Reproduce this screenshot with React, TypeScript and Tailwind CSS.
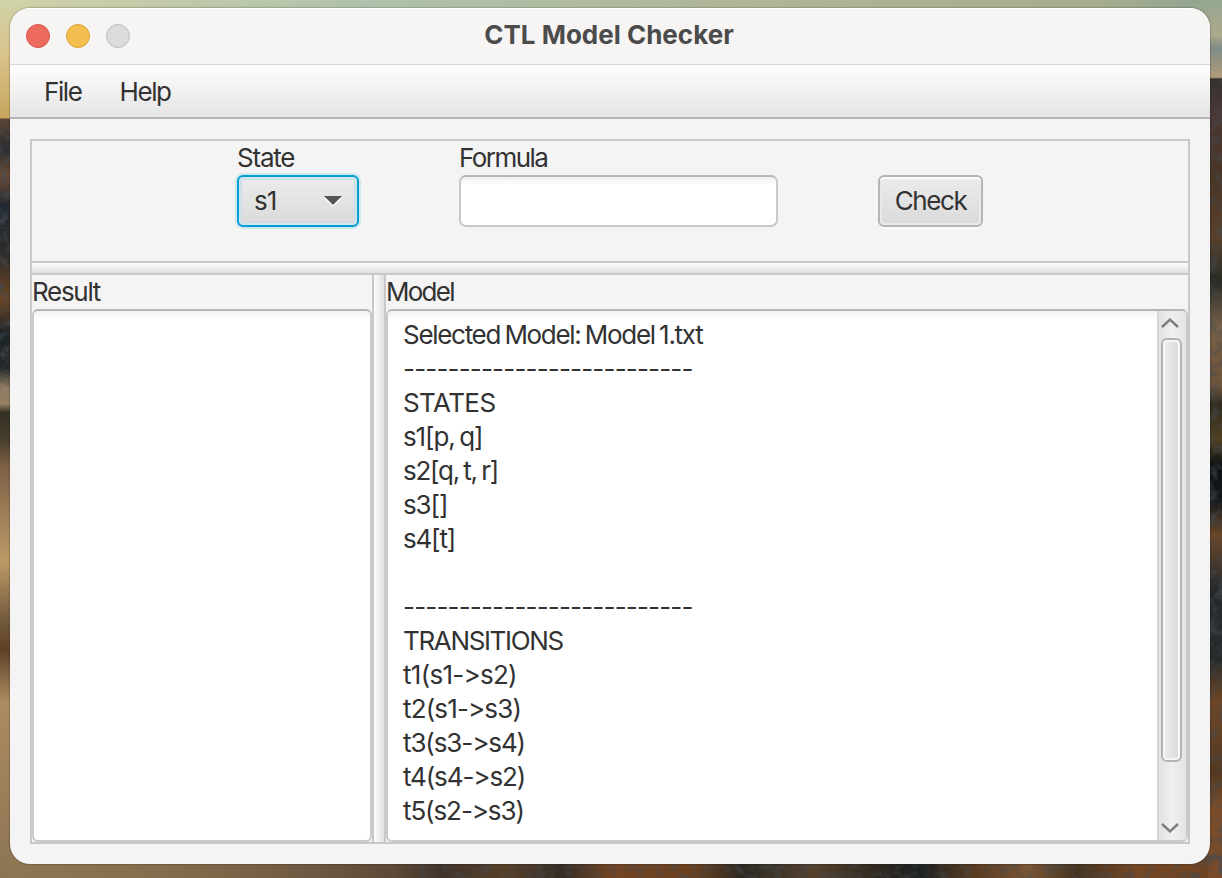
import type { ReactNode } from "react";

function Wallpaper() {
  return (
    <svg className="h-[878px] w-[1222px] [grid-area:1/1]" viewBox="0 0 1222 878" preserveAspectRatio="none">
      <defs>
        <linearGradient id="sky" x1="0" x2="1" y1="0" y2="0">
          <stop offset="0" stopColor="#d0d0a8" />
          <stop offset="0.3" stopColor="#b0c2ab" />
          <stop offset="0.6" stopColor="#b0b698" />
          <stop offset="0.9" stopColor="#a6ad8e" />
          <stop offset="1" stopColor="#8fa392" />
        </linearGradient>
        <linearGradient id="left" x1="0" x2="0" y1="0" y2="1">
          <stop offset="0" stopColor="#d0d2a8" />
          <stop offset="0.06" stopColor="#d8c48c" />
          <stop offset="0.134" stopColor="#c9a55e" />
          <stop offset="0.136" stopColor="#5b4433" />
          <stop offset="0.17" stopColor="#2b2c31" />
          <stop offset="0.2" stopColor="#6e4a30" />
          <stop offset="0.235" stopColor="#1f2830" />
          <stop offset="0.29" stopColor="#2e2c2a" />
          <stop offset="0.34" stopColor="#70451f" />
          <stop offset="0.38" stopColor="#1d2429" />
          <stop offset="0.42" stopColor="#222827" />
          <stop offset="0.44" stopColor="#8f7c63" />
          <stop offset="0.46" stopColor="#948063" />
          <stop offset="0.47" stopColor="#343125" />
          <stop offset="0.5" stopColor="#463c2b" />
          <stop offset="0.53" stopColor="#7b6046" />
          <stop offset="0.59" stopColor="#a08059" />
          <stop offset="0.64" stopColor="#bd9966" />
          <stop offset="0.7" stopColor="#796041" />
          <stop offset="0.74" stopColor="#5d4127" />
          <stop offset="0.8" stopColor="#ab8c61" />
          <stop offset="1" stopColor="#8c7454" />
        </linearGradient>
        <linearGradient id="right" x1="0" x2="0" y1="0" y2="1">
          <stop offset="0" stopColor="#94a690" />
          <stop offset="0.04" stopColor="#aca98c" />
          <stop offset="0.055" stopColor="#7f8c86" />
          <stop offset="0.088" stopColor="#b09c79" />
          <stop offset="0.09" stopColor="#35302f" />
          <stop offset="0.13" stopColor="#4a3734" />
          <stop offset="0.2" stopColor="#493423" />
          <stop offset="0.27" stopColor="#59402a" />
          <stop offset="0.32" stopColor="#272a24" />
          <stop offset="0.37" stopColor="#776047" />
          <stop offset="0.44" stopColor="#6e543b" />
          <stop offset="0.46" stopColor="#2f2b1e" />
          <stop offset="0.5" stopColor="#504021" />
          <stop offset="0.53" stopColor="#0d1011" />
          <stop offset="0.57" stopColor="#14181a" />
          <stop offset="0.61" stopColor="#6b4727" />
          <stop offset="0.67" stopColor="#26282a" />
          <stop offset="0.75" stopColor="#252a2b" />
          <stop offset="0.8" stopColor="#724723" />
          <stop offset="0.88" stopColor="#54381f" />
          <stop offset="0.92" stopColor="#7c4d2a" />
          <stop offset="1" stopColor="#7b4b29" />
        </linearGradient>
        <linearGradient id="ground" x1="0" x2="1" y1="0" y2="0">
          <stop offset="0" stopColor="#8f7652" />
          <stop offset="0.12" stopColor="#856d4d" />
          <stop offset="0.24" stopColor="#715a43" />
          <stop offset="0.32" stopColor="#5b4835" />
          <stop offset="0.36" stopColor="#403329" />
          <stop offset="0.41" stopColor="#584028" />
          <stop offset="0.46" stopColor="#342d25" />
          <stop offset="0.5" stopColor="#744422" />
          <stop offset="0.57" stopColor="#6b401f" />
          <stop offset="0.61" stopColor="#2b2922" />
          <stop offset="0.67" stopColor="#55402b" />
          <stop offset="0.73" stopColor="#2b261f" />
          <stop offset="0.76" stopColor="#1c2021" />
          <stop offset="0.8" stopColor="#56391f" />
          <stop offset="0.85" stopColor="#7c5634" />
          <stop offset="0.89" stopColor="#45331f" />
          <stop offset="0.94" stopColor="#764724" />
          <stop offset="1" stopColor="#704321" />
        </linearGradient>
        <filter id="rocks" x="0" y="0" width="1" height="1">
          <feTurbulence type="fractalNoise" baseFrequency="0.11" numOctaves="4" seed="7" />
          <feColorMatrix values="0 0 0 0 0.06  0 0 0 0 0.07  0 0 0 0 0.08  2.6 0 0 0 -1.1" />
        </filter>
      </defs>
      <rect width="1222" height="30" fill="url(#sky)" />
      <rect width="30" height="878" fill="url(#left)" />
      <rect x="1190" width="32" height="878" fill="url(#right)" />
      <rect x="14" y="850" width="1194" height="28" fill="url(#ground)" />
      <rect y="119" width="30" height="270" filter="url(#rocks)" opacity="0.8" />
      <rect x="1190" y="80" width="32" height="798" filter="url(#rocks)" opacity="0.6" />
      <rect x="420" y="850" width="802" height="28" filter="url(#rocks)" opacity="0.5" />
    </svg>
  );
}

function Line({ children, className }: { children: ReactNode; className: string }) {
  return (
    <div className="h-[34px]">
      <span className={className}>{children}</span>
    </div>
  );
}

const area =
  "overflow-hidden rounded-md border-2 border-[#cacaca] border-t-[#b5b5b5] bg-[linear-gradient(#f1f1f1,#ffffff_8px)]";

export default function App() {
  return (
    <div className="grid h-[878px] w-[1222px] overflow-hidden font-['Inter','Liberation_Sans',sans-serif] text-[26px] leading-[34px] whitespace-pre text-[#323232]">
      <Wallpaper />
      <div className="z-10 mt-2 ml-2.5 flex h-[856px] w-[1200px] flex-col overflow-hidden rounded-[20px] bg-[#f4f4f4] shadow-[0_0_2px_rgba(0,0,0,0.55)] [grid-area:1/1]">
        <header className="grid h-[57px] shrink-0 grid-cols-[1fr_auto_1fr] items-center border-b border-[#d6d6d6] bg-[#f6f5f3] px-4 shadow-[inset_0_1px_0_#ffffff]">
          <div className="flex gap-4">
            <span className="size-6 rounded-full border border-[#d9554c] bg-[#ec6a5e]" />
            <span className="size-6 rounded-full border border-[#d9a03c] bg-[#f4bf4f]" />
            <span className="size-6 rounded-full border border-[#bdbdbc] bg-[#dcdbda]" />
          </div>
          <h1 className="pr-[2px] pb-[3px] text-[26px] font-bold text-[#4b4b4b]">CTL Model Checker</h1>
        </header>
        <nav className="flex h-[54px] shrink-0 gap-[38px] border-b-2 border-[#b5b5b5] bg-[linear-gradient(#fdfdfd,#e5e5e5)] pt-[10px] pl-[34px]">
          <span className="tracking-[-1.4px]">File</span>
          <span className="tracking-[-1.4px]">Help</span>
        </nav>
        <main className="mx-5 mt-5 flex h-[705px] flex-col border-2 border-[#c8c8c8]">
          <section className="flex h-[120px] shrink-0 pl-[205px]">
            <div className="w-[222px]">
              <div className="h-[34px]"><span className="tracking-[-1.2px]">State</span></div>
              <button className="flex h-[52px] w-[122px] items-center justify-between rounded-[6px] border-2 border-[#039ed3] bg-[linear-gradient(#ececec,#dadada)] pr-[15px] pl-[15px] shadow-[0_0_0_2px_#cfe8f0,inset_0_0_0_2px_#d3e6ec,inset_0_0_0_3px_#c4dce4]">
                <span className="tracking-[-0.9px]">s1</span>
                <svg className="h-[11px] w-[18px]" viewBox="0 0 18 11">
                  <path d="M0 2H18L9 11Z" fill="#fff" />
                  <path d="M0 0H18L9 9Z" fill="#555" />
                </svg>
              </button>
            </div>
            <div className="w-[419px]">
              <div className="h-[34px]"><span className="tracking-[-1.55px]">Formula</span></div>
              <div className="h-[52px] w-[319px] rounded-[7px] border-2 border-[#c8c8c8] border-t-[#b8b8b8] bg-[linear-gradient(#f0f0f0,#ffffff_8px)]" />
            </div>
            <button className="mt-[34px] flex h-[52px] w-[105px] items-center justify-center rounded-[6px] border-2 border-[#b5b5b5] bg-[linear-gradient(#ececec,#dadada)] shadow-[0_2px_0_#fafafa,inset_0_2px_0_#fcfcfc,inset_0_0_0_2px_#e9e9e9]">
              <span className="tracking-[-1.4px]">Check</span>
            </button>
          </section>
          <div className="h-[14px] shrink-0 border-y-2 border-[#c8c8c8] bg-[linear-gradient(#fdfdfd,#e0e0e0)]" />
          <section className="flex h-[567px]">
            <div className="w-[340px]">
              <div className="h-[34px]"><span className="tracking-[-1.3px]">Result</span></div>
              <div className={`h-[533px] ${area}`} />
            </div>
            <div className="w-[14px] border-x-2 border-[#c8c8c8] bg-[linear-gradient(90deg,#fdfdfd,#e0e0e0)]" />
            <div className="w-[802px]">
              <div className="h-[34px]"><span className="tracking-[-1.75px]">Model</span></div>
              <div className={`flex h-[533px] ${area}`}>
                <div className="w-[769px] pt-[7px] pl-[15px]">
                  <Line className="tracking-[-1.3px] [word-spacing:-1.7px]">Selected Model: Model 1.txt</Line>
                  <Line className="tracking-[-0.82px]">--------------------------</Line>
                  <Line className="tracking-[-0.6px]">STATES</Line>
                  <Line className="tracking-[-1.1px] [word-spacing:-1.7px]">s1[p, q]</Line>
                  <Line className="tracking-[-1.25px] [word-spacing:-1.7px]">s2[q, t, r]</Line>
                  <Line className="tracking-[-1.1px]">s3[]</Line>
                  <Line className="tracking-[-1.2px]">s4[t]</Line>
                  <div className="h-[34px]" />
                  <Line className="tracking-[-0.82px]">--------------------------</Line>
                  <Line className="tracking-[-1.35px]">TRANSITIONS</Line>
                  <Line className="tracking-[-0.72px]">t1(s1-&gt;s2)</Line>
                  <Line className="tracking-[-0.85px]">t2(s1-&gt;s3)</Line>
                  <Line className="tracking-[-1.1px]">t3(s3-&gt;s4)</Line>
                  <Line className="tracking-[-1.1px]">t4(s4-&gt;s2)</Line>
                  <Line className="tracking-[-1.1px]">t5(s2-&gt;s3)</Line>
                </div>
                <div className="flex w-[29px] flex-col items-center border-l-2 border-[#d6d6d6] bg-[linear-gradient(90deg,#e2e2e2,#efefef_50%,#e4e4e4)] pr-[2px]">
                  <svg className="mt-[7px] mr-[3px] h-[10px] w-[18px] shrink-0" viewBox="0 0 18 10">
                    <path d="M1 9L9 1.6L17 9" fill="none" stroke="#7d7d7d" strokeWidth="2.4" />
                  </svg>
                  <div className="mt-[10px] h-[424px] w-[21px] shrink-0 rounded-[6px] border-2 border-[#b3b3b3] bg-[linear-gradient(90deg,#eeeeee,#d9d9d9)] shadow-[inset_0_0_0_2px_#f6f6f6]" />
                  <svg className="mt-[61px] mr-[3px] h-[10px] w-[18px] shrink-0" viewBox="0 0 18 10">
                    <path d="M1 1L9 8.4L17 1" fill="none" stroke="#7d7d7d" strokeWidth="2.4" />
                  </svg>
                </div>
              </div>
            </div>
          </section>
        </main>
      </div>
    </div>
  );
}
